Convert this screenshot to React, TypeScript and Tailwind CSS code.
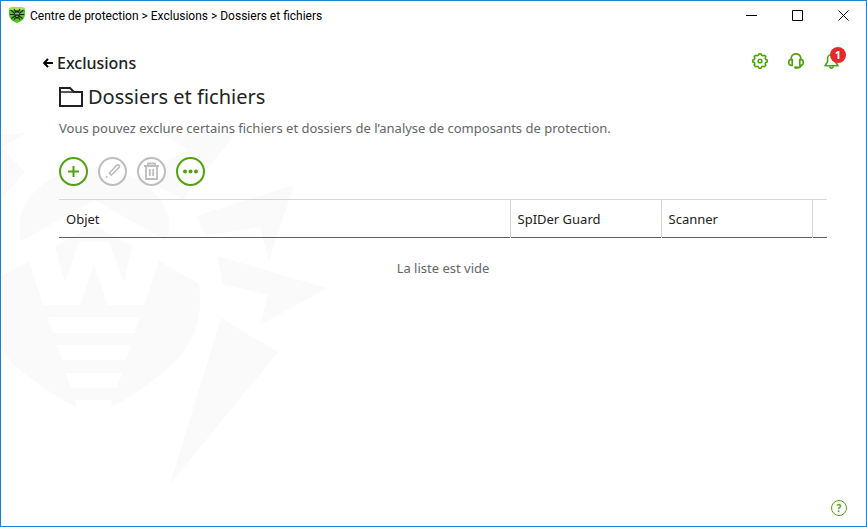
import React from "react";

const GREEN = "#4fa30f";

function Watermark() {
  return (
    <svg
      aria-hidden="true"
      className="pointer-events-none absolute left-0 top-0 h-[527px] w-[340px]"
      viewBox="1 1 340 527"
      fill="#fafafa"
    >
      <path d="M0 134Q14 135 27 132L3 147V149L25 172L0 200Z" />
      <path d="M162 133Q200 139 238 131L183 199L137 176L188 150Z" />
      <path d="M21 241C17 222 21 205 34 192C50 176 70 168 94 168C120 168 142 178 158 197C170 212 172 226 166 241L95 200Z" />
      <path d="M196 216L294 185L269 261L260 227L206 236Z" />
      <path d="M217 256L327 288L260 325L268 295L223 284Z" />
      <path d="M221 318L278 352L170 484Z" />
      <path d="M55 246L94 225L132 246L124 282L109 242H79L65 282Z" />
      <path
        fillRule="evenodd"
        d="M0 277L29 261L43 305H80L94 264L108 305H144L159 261L199 284C204 322 192 350 160 375Q135 395 110 408L112 400H76L77 408Q45 391 15 366L0 348ZM48 317L53 333H134L140 317ZM57 345L62 360H126L131 345ZM66 373L71 388H117L122 373Z"
      />
    </svg>
  );
}

function ShieldLogo() {
  return (
    <svg viewBox="0 0 16 16" className="size-4" aria-hidden="true">
      <path d="M0 1Q8-1 16 1V8Q15 14 8 16Q1 14 0 8Z" fill="#59c51c" />
      <path d="M0 1Q8-1 16 1V3H0Z" fill="#a5dd70" />
      <path
        d="M5 2L6.5 4.5M11 2L9.5 4.5M1.5 3L5.5 6M14.5 3L10.5 6M1 7.5L5 7.5M15 7.5L11 7.5M2.5 11.5L6 9M13.5 11.5L10 9M5 13L6.5 10.5M11 13L9.5 10.5"
        fill="none"
        stroke="#10230a"
        strokeWidth="1.1"
      />
      <path d="M6 4Q8 3 10 4L11 7Q10.5 10.5 8 12Q5.5 10.5 5 7Z" fill="#10230a" />
      <path d="M6 5.5L7 7.5L8 5.5L9 7.5L10 5.5M6.8 9.3H9.2" fill="none" stroke="#d6f5c4" strokeWidth="0.7" />
    </svg>
  );
}

function WindowButton({ label, path }: { label: string; path: string }) {
  return (
    <button type="button" aria-label={label} className="grid h-7 w-[46px] place-items-center">
      <svg viewBox="0 0 11 11" className="size-[11px]" fill="none" stroke="#000" aria-hidden="true">
        <path d={path} />
      </svg>
    </button>
  );
}

function Gear() {
  return (
    <svg viewBox="0 0 16 16" className="size-4" fill="none" stroke={GREEN} strokeWidth="1.6" strokeLinejoin="round" aria-hidden="true">
      <path d="M6.4 2.3L7 .8H9L9.6 2.3L10.9 2.8L12.4 2.2L13.8 3.6L13.2 5.1L13.7 6.4L15.2 7V9L13.7 9.6L13.2 10.9L13.8 12.4L12.4 13.8L10.9 13.2L9.6 13.7L9 15.2H7L6.4 13.7L5.1 13.2L3.6 13.8L2.2 12.4L2.8 10.9L2.3 9.6L.8 9V7L2.3 6.4L2.8 5.1L2.2 3.6L3.6 2.2L5.1 2.8Z" />
      <circle cx="8" cy="8" r="1.8" />
    </svg>
  );
}

function Headset() {
  return (
    <svg viewBox="0 0 16 16" className="size-4" fill="none" stroke={GREEN} strokeWidth="1.7" strokeLinejoin="round" aria-hidden="true">
      <path d="M3.2 7V5.6A4.8 4.8 0 0 1 12.8 5.6V7" />
      <path d="M4.2 6.6V12.3H3A2.2 2.2 0 0 1 .8 10.1V8.8A2.2 2.2 0 0 1 3 6.6ZM11.8 6.6V12.3H13A2.2 2.2 0 0 0 15.2 10.1V8.8A2.2 2.2 0 0 0 13 6.6Z" />
      <path d="M13 12.5Q12.6 14.6 10 14.7H8" />
      <ellipse cx="8" cy="14.6" rx="2" ry="1.4" fill={GREEN} stroke="none" />
    </svg>
  );
}

function Bell() {
  return (
    <svg viewBox="0 0 16 16" className="size-4" fill="none" stroke={GREEN} strokeWidth="1.6" strokeLinejoin="round" aria-hidden="true">
      <path d="M7.5 1.5A4 4 0 0 0 3.6 5.5V8.8L1 12.8H14L11.4 8.8V5.5A4 4 0 0 0 7.5 1.5Z" />
      <path d="M5.5 13.5Q7.5 16.8 9.5 13.5" />
    </svg>
  );
}

function ToolButton({ label, disabled, children }: { label: string; disabled?: boolean; children: React.ReactNode }) {
  return (
    <button
      type="button"
      aria-label={label}
      disabled={disabled}
      className="size-[29px] rounded-full border-2 border-[#4fa30f] bg-white text-[#4fa30f] disabled:border-[#bdbdbd] disabled:text-[#bdbdbd]"
    >
      <svg viewBox="0 0 25 25" className="size-[25px]" fill="none" stroke="currentColor" strokeWidth="2" aria-hidden="true">
        {children}
      </svg>
    </button>
  );
}

export default function App() {
  return (
    <div className="relative isolate flex min-h-screen flex-col border border-[#1883d7] bg-white font-['Noto_Sans',sans-serif] text-[#222]">
      <div className="absolute inset-0 -z-10 overflow-hidden">
        <Watermark />
      </div>
      <header className="flex h-7 items-center pl-2">
        <ShieldLogo />
        <span className="ml-[5px] flex-1 pt-px font-['Roboto',sans-serif] text-[12px] leading-4 text-black">
          Centre de protection &gt; Exclusions &gt; Dossiers et fichiers
        </span>
        <WindowButton label="Réduire" path="M0 5.5H11" />
        <WindowButton label="Agrandir" path="M.5.5H10.5V10.5H.5Z" />
        <WindowButton label="Fermer" path="M.5.5L10.5 10.5M10.5.5L.5 10.5" />
      </header>

      <div className="flex items-start justify-between pl-[42px] pr-[26px] pt-5">
        <a href="#exclusions" className="flex items-center gap-1 pt-[2px] text-[16px] font-medium leading-6">
          <svg viewBox="0 0 10 10" className="size-[10px]" fill="none" stroke="#000" strokeWidth="2" aria-hidden="true">
            <path d="M5 .8L1.2 5L5 9.2M1.2 5H10" />
          </svg>
          Exclusions
        </a>
        <nav className="flex gap-5 pt-1">
          <button type="button" aria-label="Paramètres"><Gear /></button>
          <button type="button" aria-label="Support"><Headset /></button>
          <button type="button" aria-label="Notifications" className="relative">
            <Bell />
            <span className="absolute -top-[6px] left-[6px] size-4 rounded-full bg-[#e12a2a] text-center text-[11px] font-bold leading-4 text-white">
              1
            </span>
          </button>
        </nav>
      </div>

      <main className="flex-1 pl-[58px] pr-[39px]">
        <h1 className="flex items-center gap-[5px] pt-[6px] text-[20px] leading-8">
          <svg viewBox="0 0 24 20" className="h-5 w-6" fill="none" stroke="#222" strokeWidth="2" aria-hidden="true">
            <path d="M1 19V1H11L15 5H23V19Z" />
            <path d="M1 5H15" strokeWidth="1.5" />
          </svg>
          Dossiers et fichiers
        </h1>
        <p className="pt-[5px] text-[13px] leading-5 text-[#666]">
          Vous pouvez exclure certains fichiers et dossiers de l’analyse de composants de protection.
        </p>
        <div className="flex gap-[10px] pt-[19px]">
          <ToolButton label="Ajouter"><path d="M12.5 7V18M7 12.5H18" /></ToolButton>
          <ToolButton label="Modifier" disabled>
            <path d="M9.3 14.3L16.8 6.2Q18 5.2 19 6.2Q20 7.3 19 8.4L11.3 16.2Z" strokeWidth="1.6" />
            <path d="M5.5 19L6.3 16.4L8.2 18.2Z" fill="currentColor" stroke="none" />
          </ToolButton>
          <ToolButton label="Supprimer" disabled>
            <path d="M5 7H20M9 6.5V4.5H16V6.5M7 7V20H18V7M10.8 10V17M14.2 10V17" strokeWidth="1.8" />
          </ToolButton>
          <ToolButton label="Plus">
            <g fill="currentColor" stroke="none">
              <circle cx="7" cy="12.5" r="2" />
              <circle cx="12.5" cy="12.5" r="2" />
              <circle cx="18" cy="12.5" r="2" />
            </g>
          </ToolButton>
        </div>
        <table className="mt-[13px] w-full table-fixed border-collapse text-[13px] leading-5">
          <thead>
            <tr className="h-[38px] border-b border-t border-b-[#5f5f5f] border-t-[#d6d6d6] text-left">
              <th scope="col" className="px-[7px] font-normal">Objet</th>
              <th scope="col" className="w-[151px] border-l border-[#d6d6d6] px-[7px] font-normal">SpIDer Guard</th>
              <th scope="col" className="w-[151px] border-l border-[#d6d6d6] px-[7px] font-normal">Scanner</th>
              <td className="w-[15px] border-l border-[#d6d6d6]" />
            </tr>
          </thead>
          <tbody>
            <tr>
              <td colSpan={4} className="pt-5 text-center text-[#666]">La liste est vide</td>
            </tr>
          </tbody>
        </table>
      </main>

      <footer className="flex justify-end pb-[10px] pr-[19px]">
        <button
          type="button"
          aria-label="Aide"
          className="size-4 rounded-full border border-[#4fa30f] text-center text-[10px] font-bold leading-[14px] text-[#4fa30f]"
        >
          ?
        </button>
      </footer>
    </div>
  );
}
